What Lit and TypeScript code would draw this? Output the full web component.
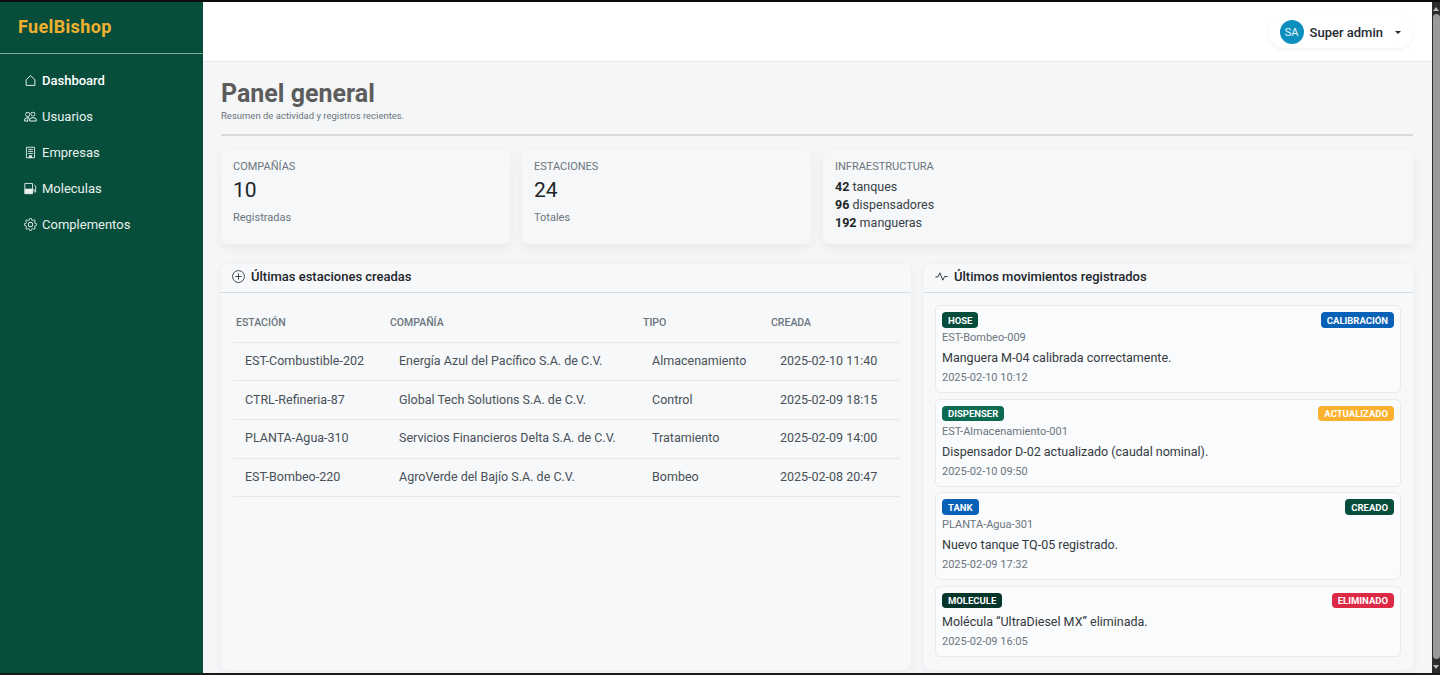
import { LitElement, css, html, svg } from "lit";
import { customElement } from "lit/decorators.js";

const icons = {
  house: svg`<path fill="none" stroke="currentColor" stroke-width="1.1" stroke-linejoin="round" d="M8 2 13.4 7v7H2.6V7z"/>`,
  people: svg`<path fill="currentColor" d="M15 14s1 0 1-1-1-4-5-4-5 3-5 4 1 1 1 1zm-7.978-1L7 12.996c.001-.264.167-1.03.76-1.72C8.312 10.629 9.282 10 11 10c1.717 0 2.687.63 3.24 1.276.593.69.758 1.457.76 1.72l-.008.002-.014.002zM11 7a2 2 0 1 0 0-4 2 2 0 0 0 0 4m3-2a3 3 0 1 1-6 0 3 3 0 0 1 6 0M6.936 9.28a6 6 0 0 0-1.23-.247A7 7 0 0 0 5 9c-4 0-5 3-5 4q0 1 1 1h4.216A2.24 2.24 0 0 1 5 13c0-1.01.377-2.042 1.09-2.904.243-.294.526-.569.846-.816M4.92 10A5.5 5.5 0 0 0 4 13H1c0-.26.164-1.03.76-1.724.545-.636 1.492-1.256 3.16-1.275ZM1.5 5.5a3 3 0 1 1 6 0 3 3 0 0 1-6 0m3-2a2 2 0 1 0 0 4 2 2 0 0 0 0-4"/>`,
  building: svg`<path fill="none" stroke="currentColor" stroke-width="1.1" d="M3 1.5h10v13H3zM5 4.2h6M5 6.7h6M5 9.2h6"/><path fill="currentColor" d="M6 11.5h4v3H6z"/>`,
  fuel: svg`<path fill="none" stroke="currentColor" stroke-width="1.1" d="M1 1.8h9.5v12.6H1zM10.5 9.5h2v2.4c0 1 1.9 1 1.9 0V5.5L12.8 3.4"/><path fill="currentColor" d="M1 8.2h9.5v6.2H1z"/>`,
  gear: svg`<path fill="currentColor" d="M8 4.754a3.246 3.246 0 1 0 0 6.492 3.246 3.246 0 0 0 0-6.492M5.754 8a2.246 2.246 0 1 1 4.492 0 2.246 2.246 0 0 1-4.492 0"/><path fill="currentColor" d="M9.796 1.343c-.527-1.79-3.065-1.79-3.592 0l-.094.319a.873.873 0 0 1-1.255.52l-.292-.16c-1.64-.892-3.433.902-2.54 2.541l.159.292a.873.873 0 0 1-.52 1.255l-.319.094c-1.79.527-1.79 3.065 0 3.592l.319.094a.873.873 0 0 1 .52 1.255l-.16.292c-.892 1.64.901 3.434 2.541 2.54l.292-.159a.873.873 0 0 1 1.255.52l.094.319c.527 1.79 3.065 1.79 3.592 0l.094-.319a.873.873 0 0 1 1.255-.52l.292.16c1.64.893 3.434-.902 2.54-2.541l-.159-.292a.873.873 0 0 1 .52-1.255l.319-.094c1.79-.527 1.79-3.065 0-3.592l-.319-.094a.873.873 0 0 1-.52-1.255l.16-.292c.893-1.64-.902-3.433-2.541-2.54l-.292.159a.873.873 0 0 1-1.255-.52zm-2.633.283c.246-.835 1.428-.835 1.674 0l.094.319a1.873 1.873 0 0 0 2.693 1.115l.291-.16c.764-.415 1.6.42 1.184 1.185l-.159.292a1.873 1.873 0 0 0 1.116 2.692l.318.094c.835.246.835 1.428 0 1.674l-.319.094a1.873 1.873 0 0 0-1.115 2.693l.16.291c.415.764-.42 1.6-1.185 1.184l-.291-.159a1.873 1.873 0 0 0-2.693 1.116l-.094.318c-.246.835-1.428.835-1.674 0l-.094-.319a1.873 1.873 0 0 0-2.692-1.115l-.292.16c-.764.415-1.6-.42-1.184-1.185l.159-.291A1.873 1.873 0 0 0 1.945 8.93l-.319-.094c-.835-.246-.835-1.428 0-1.674l.319-.094A1.873 1.873 0 0 0 3.06 4.377l-.16-.292c-.415-.764.42-1.6 1.185-1.184l.292.159a1.873 1.873 0 0 0 2.692-1.115z"/>`,
  plus: svg`<circle cx="8" cy="8" r="7.3" fill="none" stroke="currentColor" stroke-width="1"/><path fill="none" stroke="currentColor" stroke-width="1" d="M8 4.2v7.6M4.2 8h7.6"/>`,
  activity: svg`<path fill="none" stroke="currentColor" stroke-width="1.1" stroke-linejoin="round" d="M.5 8.5h3.2L6 3.5l3.6 9 2.2-4.5h3.7"/>`,
};
type IconName = keyof typeof icons;

const icon = (name: IconName) =>
  html`<svg class="icon" viewBox="0 0 16 16" aria-hidden="true">${icons[name]}</svg>`;

const navItems: { name: string; icon: IconName; active?: boolean }[] = [
  { name: "Dashboard", icon: "house", active: true },
  { name: "Usuarios", icon: "people" },
  { name: "Empresas", icon: "building" },
  { name: "Moleculas", icon: "fuel" },
  { name: "Complementos", icon: "gear" },
];

const stations = [
  ["EST-Combustible-202", "Energía Azul del Pacífico S.A. de C.V.", "Almacenamiento", "2025-02-10 11:40"],
  ["CTRL-Refineria-87", "Global Tech Solutions S.A. de C.V.", "Control", "2025-02-09 18:15"],
  ["PLANTA-Agua-310", "Servicios Financieros Delta S.A. de C.V.", "Tratamiento", "2025-02-09 14:00"],
  ["EST-Bombeo-220", "AgroVerde del Bajío S.A. de C.V.", "Bombeo", "2025-02-08 20:47"],
];

const movements = [
  { tag: "HOSE", tagClass: "green", action: "CALIBRACIÓN", actionClass: "blue", station: "EST-Bombeo-009", text: "Manguera M-04 calibrada correctamente.", date: "2025-02-10 10:12" },
  { tag: "DISPENSER", tagClass: "teal", action: "ACTUALIZADO", actionClass: "amber", station: "EST-Almacenamiento-001", text: "Dispensador D-02 actualizado (caudal nominal).", date: "2025-02-10 09:50" },
  { tag: "TANK", tagClass: "blue", action: "CREADO", actionClass: "green", station: "PLANTA-Agua-301", text: "Nuevo tanque TQ-05 registrado.", date: "2025-02-09 17:32" },
  { tag: "MOLECULE", tagClass: "dark", action: "ELIMINADO", actionClass: "red", station: "", text: "Molécula “UltraDiesel MX” eliminada.", date: "2025-02-09 16:05" },
];

@customElement("app-root")
export class AppRoot extends LitElement {
  static styles = css`
    :host {
      display: block;
      height: 675px;
      overflow: hidden;
      font-family: Roboto, "Noto Sans", "Liberation Sans", sans-serif;
      color: #212529;
    }

    * {
      box-sizing: border-box;
    }

    .frame {
      height: 675px;
      display: grid;
      grid-template-columns: 203px 1fr 8px;
      border-top: 2px solid #0d0d0d;
      border-bottom: 2px solid #1a1a1a;
      background: #f4f6f8;
    }

    .icon {
      width: 13px;
      height: 13px;
      flex: none;
    }

    /* sidebar */
    .sidebar {
      background: #064e3b;
      color: #e8f0ec;
    }

    .brand {
      height: 52px;
      padding: 0 0 2px 18px;
      display: flex;
      align-items: center;
      border-bottom: 1px solid #7ea89a;
      color: #f0b02e;
      font-size: 18px;
      font-weight: 700;
      letter-spacing: 0.35px;
    }

    .nav {
      display: flex;
      flex-direction: column;
      padding-top: 8px;
    }

    .nav a {
      height: 36px;
      padding-left: 24px;
      display: flex;
      align-items: center;
      gap: 5px;
      font-size: 13px;
    }

    .nav a.active {
      color: #fff;
      font-weight: 500;
    }

    /* main column */
    .main {
      display: flex;
      flex-direction: column;
      min-width: 0;
    }

    .topbar {
      height: 60px;
      flex: none;
      background: #fff;
      border-bottom: 1px solid #e6e8ea;
      display: flex;
      justify-content: flex-end;
      align-items: flex-start;
      padding: 0 19px 0 0;
    }

    .user {
      margin-top: 14px;
      height: 32px;
      padding: 0 12px 0 12px;
      display: flex;
      align-items: center;
      gap: 6px;
      border-radius: 16px;
      background: #fff;
      box-shadow: 0 2px 4px rgba(0, 0, 0, 0.05);
      font-size: 13px;
      font-weight: 500;
      color: #1e2a32;
    }

    .avatar {
      width: 24px;
      height: 24px;
      border-radius: 50%;
      background: #0d8fbd;
      color: #e8f6fb;
      font-size: 11px;
      font-weight: 400;
      display: flex;
      align-items: center;
      justify-content: center;
    }

    .caret {
      margin-left: 6px;
      width: 0;
      height: 0;
      border-left: 3px solid transparent;
      border-right: 3px solid transparent;
      border-top: 3px solid #1e2a32;
    }

    .content {
      flex: 1;
      min-height: 0;
      padding: 16px 19px 3px 18px;
      display: flex;
      flex-direction: column;
    }

    .page-head {
      height: 58px;
      flex: none;
      border-bottom: 2px solid #d8dadc;
    }

    h1 {
      margin: 0;
      font-size: 25px;
      line-height: 32px;
      font-weight: 700;
      color: #5c5c5c;
    }

    .page-head p {
      margin: 0;
      font-size: 9.5px;
      line-height: 11px;
      color: #6c757d;
    }

    .cards {
      margin-top: 14px;
      height: 94px;
      flex: none;
      display: grid;
      grid-template-columns: 289px 289px 1fr;
      gap: 12px;
    }

    .card {
      padding: 10px 12px;
      border-radius: 6px;
      background: #f5f7f9;
      box-shadow: 0 4px 12px rgba(0, 0, 0, 0.06);
      display: flex;
      flex-direction: column;
    }

    .card .label {
      font-size: 11px;
      line-height: 14px;
      color: #6c757d;
    }

    .card .value {
      margin-top: 3px;
      font-size: 21px;
      line-height: 26px;
      color: #212529;
    }

    .card .note {
      margin-top: 7px;
      font-size: 11px;
      line-height: 16px;
      color: #6c757d;
    }

    .card .lines {
      margin-top: 4px;
      font-size: 12.5px;
      line-height: 18px;
      color: #3a4046;
    }

    .card .lines b {
      color: #212529;
    }

    .panels {
      margin-top: 20px;
      flex: 1;
      min-height: 0;
      display: grid;
      grid-template-columns: 690px 1fr;
      gap: 13px;
    }

    .panel {
      border-radius: 6px;
      background: #f6f8fa;
      box-shadow: 0 2px 10px rgba(0, 0, 0, 0.05);
      display: flex;
      flex-direction: column;
      min-height: 0;
    }

    .panel-head {
      height: 29px;
      flex: none;
      padding: 0 0 4px 11px;
      display: flex;
      align-items: center;
      gap: 6px;
      border-bottom: 1px solid #d9dcdf;
      font-size: 13px;
      font-weight: 500;
      color: #212529;
    }

    /* table */
    .table-wrap {
      padding: 15px 11px 0 12px;
    }

    table {
      width: 100%;
      border-collapse: collapse;
      table-layout: fixed;
    }

    th {
      height: 34px;
      padding: 0 0 4px 3px;
      text-align: left;
      font-size: 10.5px;
      font-weight: 500;
      color: #6c757d;
      vertical-align: middle;
    }

    td {
      height: 38.7px;
      padding: 0 0 2px 12px;
      border-top: 1px solid #e5e7e9;
      font-size: 12.5px;
      color: #495057;
    }

    tr:last-child td {
      border-bottom: 1px solid #e5e7e9;
    }

    /* movements */
    .moves {
      padding: 12px 12px 0 11px;
      display: flex;
      flex-direction: column;
      gap: 5.5px;
    }

    .move {
      padding: 6px 6px 7px 6px;
      border: 1px solid #e8eaec;
      border-radius: 5px;
      background: #fafbfc;
    }

    .move-top {
      display: flex;
      justify-content: space-between;
      align-items: center;
      height: 16px;
    }

    .badge {
      height: 15.5px;
      padding: 0 6px;
      border-radius: 4px;
      display: flex;
      align-items: center;
      font-size: 9.5px;
      font-weight: 700;
      color: #fff;
    }

    .badge.green { background: #064e3b; }
    .badge.teal { background: #0a6b52; }
    .badge.blue { background: #0761b7; }
    .badge.dark { background: #04342a; }
    .badge.amber { background: #fbb02e; }
    .badge.red { background: #dc2a45; }

    .station {
      margin-top: 3px;
      font-size: 11px;
      line-height: 14px;
      color: #6c757d;
    }

    .text {
      margin-top: 5px;
      font-size: 12.5px;
      line-height: 16px;
      color: #343a40;
    }

    .date {
      margin-top: 5px;
      font-size: 11px;
      line-height: 14px;
      color: #6c757d;
    }

    /* window scrollbar */
    .scrollbar {
      background: #2c2c2c;
      display: flex;
      flex-direction: column;
      align-items: center;
      padding: 5px 0 4px;
    }

    .scrollbar .arrow {
      width: 0;
      height: 0;
      border-left: 3px solid transparent;
      border-right: 3px solid transparent;
    }

    .scrollbar .up {
      border-bottom: 4px solid #b8b8b8;
    }

    .scrollbar .down {
      border-top: 4px solid #b8b8b8;
    }

    .scrollbar .thumb {
      flex: 1;
      width: 7px;
      margin: 3px 0 6px;
      border-radius: 4px;
      background: #9a9a9a;
    }
  `;

  render() {
    return html`
      <div class="frame">
        <aside class="sidebar">
          <div class="brand">FuelBishop</div>
          <nav class="nav">
            ${navItems.map(
              (item) => html`<a class=${item.active ? "active" : ""}>${icon(item.icon)}${item.name}</a>`
            )}
          </nav>
        </aside>

        <div class="main">
          <header class="topbar">
            <div class="user">
              <span class="avatar">SA</span>
              Super admin
              <span class="caret"></span>
            </div>
          </header>

          <main class="content">
            <div class="page-head">
              <h1>Panel general</h1>
              <p>Resumen de actividad y registros recientes.</p>
            </div>

            <section class="cards">
              <div class="card">
                <span class="label">COMPAÑÍAS</span>
                <span class="value">10</span>
                <span class="note">Registradas</span>
              </div>
              <div class="card">
                <span class="label">ESTACIONES</span>
                <span class="value">24</span>
                <span class="note">Totales</span>
              </div>
              <div class="card">
                <span class="label">INFRAESTRUCTURA</span>
                <div class="lines">
                  <div><b>42</b> tanques</div>
                  <div><b>96</b> dispensadores</div>
                  <div><b>192</b> mangueras</div>
                </div>
              </div>
            </section>

            <section class="panels">
              <div class="panel">
                <div class="panel-head">${icon("plus")}Últimas estaciones creadas</div>
                <div class="table-wrap">
                  <table>
                    <colgroup>
                      <col style="width: 154px" />
                      <col style="width: 253px" />
                      <col style="width: 128px" />
                      <col />
                    </colgroup>
                    <thead>
                      <tr><th>ESTACIÓN</th><th>COMPAÑÍA</th><th>TIPO</th><th>CREADA</th></tr>
                    </thead>
                    <tbody>
                      ${stations.map(
                        (row) => html`<tr>${row.map((cell) => html`<td>${cell}</td>`)}</tr>`
                      )}
                    </tbody>
                  </table>
                </div>
              </div>

              <div class="panel">
                <div class="panel-head">${icon("activity")}Últimos movimientos registrados</div>
                <div class="moves">
                  ${movements.map(
                    (m) => html`
                      <article class="move">
                        <div class="move-top">
                          <span class="badge ${m.tagClass}">${m.tag}</span>
                          <span class="badge ${m.actionClass}">${m.action}</span>
                        </div>
                        ${m.station ? html`<div class="station">${m.station}</div>` : ""}
                        <div class="text">${m.text}</div>
                        <div class="date">${m.date}</div>
                      </article>
                    `
                  )}
                </div>
              </div>
            </section>
          </main>
        </div>

        <div class="scrollbar">
          <span class="arrow up"></span>
          <span class="thumb"></span>
          <span class="arrow down"></span>
        </div>
      </div>
    `;
  }
}
